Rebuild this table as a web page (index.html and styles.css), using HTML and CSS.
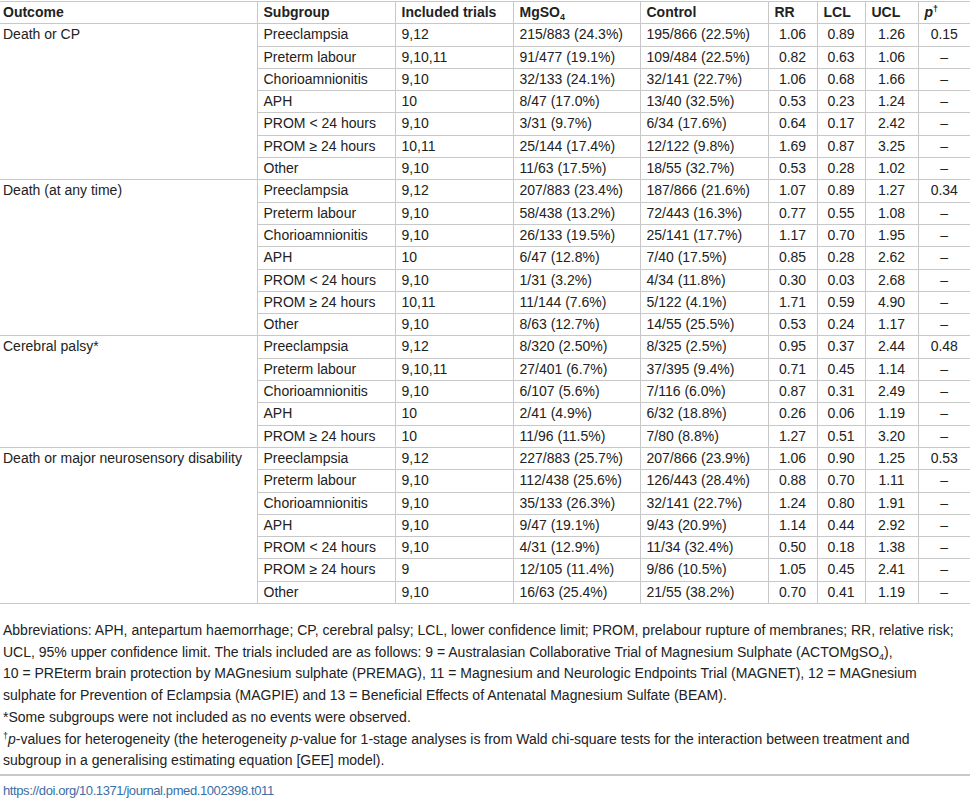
FILE: index.html
```html
<!DOCTYPE html>
<html lang="en">
<head>
  <meta charset="UTF-8">
  <meta name="viewport" content="width=device-width, initial-scale=1.0">
  <title>Subgroup analyses by reason for preterm birth</title>
  <link rel="stylesheet" href="styles.css">
</head>
<body>
  <table class="data-table">
    <colgroup>
      <col class="c-outcome">
      <col class="c-subgroup">
      <col class="c-trials">
      <col class="c-mg">
      <col class="c-control">
      <col class="c-rr">
      <col class="c-lcl">
      <col class="c-ucl">
      <col class="c-p">
    </colgroup>
    <thead>
      <tr>
        <th class="first">Outcome</th>
        <th>Subgroup</th>
        <th>Included trials</th>
        <th>MgSO<sub>4</sub></th>
        <th>Control</th>
        <th>RR</th>
        <th>LCL</th>
        <th>UCL</th>
        <th><i>p</i><sup>†</sup></th>
      </tr>
    </thead>
    <tbody>
      <!-- Death or CP -->
      <tr>
        <td class="first" rowspan="7">Death or CP</td>
        <td>Preeclampsia</td><td>9,12</td><td>215/883 (24.3%)</td><td>195/866 (22.5%)</td>
        <td class="num">1.06</td><td class="num">0.89</td><td class="num">1.26</td><td class="num">0.15</td>
      </tr>
      <tr>
        <td>Preterm labour</td><td>9,10,11</td><td>91/477 (19.1%)</td><td>109/484 (22.5%)</td>
        <td class="num">0.82</td><td class="num">0.63</td><td class="num">1.06</td><td class="num">–</td>
      </tr>
      <tr>
        <td>Chorioamnionitis</td><td>9,10</td><td>32/133 (24.1%)</td><td>32/141 (22.7%)</td>
        <td class="num">1.06</td><td class="num">0.68</td><td class="num">1.66</td><td class="num">–</td>
      </tr>
      <tr>
        <td>APH</td><td>10</td><td>8/47 (17.0%)</td><td>13/40 (32.5%)</td>
        <td class="num">0.53</td><td class="num">0.23</td><td class="num">1.24</td><td class="num">–</td>
      </tr>
      <tr>
        <td>PROM &lt; 24 hours</td><td>9,10</td><td>3/31 (9.7%)</td><td>6/34 (17.6%)</td>
        <td class="num">0.64</td><td class="num">0.17</td><td class="num">2.42</td><td class="num">–</td>
      </tr>
      <tr>
        <td>PROM ≥ 24 hours</td><td>10,11</td><td>25/144 (17.4%)</td><td>12/122 (9.8%)</td>
        <td class="num">1.69</td><td class="num">0.87</td><td class="num">3.25</td><td class="num">–</td>
      </tr>
      <tr>
        <td>Other</td><td>9,10</td><td>11/63 (17.5%)</td><td>18/55 (32.7%)</td>
        <td class="num">0.53</td><td class="num">0.28</td><td class="num">1.02</td><td class="num">–</td>
      </tr>

      <!-- Death (at any time) -->
      <tr>
        <td class="first" rowspan="7">Death (at any time)</td>
        <td>Preeclampsia</td><td>9,12</td><td>207/883 (23.4%)</td><td>187/866 (21.6%)</td>
        <td class="num">1.07</td><td class="num">0.89</td><td class="num">1.27</td><td class="num">0.34</td>
      </tr>
      <tr>
        <td>Preterm labour</td><td>9,10</td><td>58/438 (13.2%)</td><td>72/443 (16.3%)</td>
        <td class="num">0.77</td><td class="num">0.55</td><td class="num">1.08</td><td class="num">–</td>
      </tr>
      <tr>
        <td>Chorioamnionitis</td><td>9,10</td><td>26/133 (19.5%)</td><td>25/141 (17.7%)</td>
        <td class="num">1.17</td><td class="num">0.70</td><td class="num">1.95</td><td class="num">–</td>
      </tr>
      <tr>
        <td>APH</td><td>10</td><td>6/47 (12.8%)</td><td>7/40 (17.5%)</td>
        <td class="num">0.85</td><td class="num">0.28</td><td class="num">2.62</td><td class="num">–</td>
      </tr>
      <tr>
        <td>PROM &lt; 24 hours</td><td>9,10</td><td>1/31 (3.2%)</td><td>4/34 (11.8%)</td>
        <td class="num">0.30</td><td class="num">0.03</td><td class="num">2.68</td><td class="num">–</td>
      </tr>
      <tr>
        <td>PROM ≥ 24 hours</td><td>10,11</td><td>11/144 (7.6%)</td><td>5/122 (4.1%)</td>
        <td class="num">1.71</td><td class="num">0.59</td><td class="num">4.90</td><td class="num">–</td>
      </tr>
      <tr>
        <td>Other</td><td>9,10</td><td>8/63 (12.7%)</td><td>14/55 (25.5%)</td>
        <td class="num">0.53</td><td class="num">0.24</td><td class="num">1.17</td><td class="num">–</td>
      </tr>

      <!-- Cerebral palsy -->
      <tr>
        <td class="first" rowspan="5">Cerebral palsy*</td>
        <td>Preeclampsia</td><td>9,12</td><td>8/320 (2.50%)</td><td>8/325 (2.5%)</td>
        <td class="num">0.95</td><td class="num">0.37</td><td class="num">2.44</td><td class="num">0.48</td>
      </tr>
      <tr>
        <td>Preterm labour</td><td>9,10,11</td><td>27/401 (6.7%)</td><td>37/395 (9.4%)</td>
        <td class="num">0.71</td><td class="num">0.45</td><td class="num">1.14</td><td class="num">–</td>
      </tr>
      <tr>
        <td>Chorioamnionitis</td><td>9,10</td><td>6/107 (5.6%)</td><td>7/116 (6.0%)</td>
        <td class="num">0.87</td><td class="num">0.31</td><td class="num">2.49</td><td class="num">–</td>
      </tr>
      <tr>
        <td>APH</td><td>10</td><td>2/41 (4.9%)</td><td>6/32 (18.8%)</td>
        <td class="num">0.26</td><td class="num">0.06</td><td class="num">1.19</td><td class="num">–</td>
      </tr>
      <tr>
        <td>PROM ≥ 24 hours</td><td>10</td><td>11/96 (11.5%)</td><td>7/80 (8.8%)</td>
        <td class="num">1.27</td><td class="num">0.51</td><td class="num">3.20</td><td class="num">–</td>
      </tr>

      <!-- Death or major neurosensory disability -->
      <tr>
        <td class="first" rowspan="7">Death or major neurosensory disability</td>
        <td>Preeclampsia</td><td>9,12</td><td>227/883 (25.7%)</td><td>207/866 (23.9%)</td>
        <td class="num">1.06</td><td class="num">0.90</td><td class="num">1.25</td><td class="num">0.53</td>
      </tr>
      <tr>
        <td>Preterm labour</td><td>9,10</td><td>112/438 (25.6%)</td><td>126/443 (28.4%)</td>
        <td class="num">0.88</td><td class="num">0.70</td><td class="num">1.11</td><td class="num">–</td>
      </tr>
      <tr>
        <td>Chorioamnionitis</td><td>9,10</td><td>35/133 (26.3%)</td><td>32/141 (22.7%)</td>
        <td class="num">1.24</td><td class="num">0.80</td><td class="num">1.91</td><td class="num">–</td>
      </tr>
      <tr>
        <td>APH</td><td>9,10</td><td>9/47 (19.1%)</td><td>9/43 (20.9%)</td>
        <td class="num">1.14</td><td class="num">0.44</td><td class="num">2.92</td><td class="num">–</td>
      </tr>
      <tr>
        <td>PROM &lt; 24 hours</td><td>9,10</td><td>4/31 (12.9%)</td><td>11/34 (32.4%)</td>
        <td class="num">0.50</td><td class="num">0.18</td><td class="num">1.38</td><td class="num">–</td>
      </tr>
      <tr>
        <td>PROM ≥ 24 hours</td><td>9</td><td>12/105 (11.4%)</td><td>9/86 (10.5%)</td>
        <td class="num">1.05</td><td class="num">0.45</td><td class="num">2.41</td><td class="num">–</td>
      </tr>
      <tr>
        <td>Other</td><td>9,10</td><td>16/63 (25.4%)</td><td>21/55 (38.2%)</td>
        <td class="num">0.70</td><td class="num">0.41</td><td class="num">1.19</td><td class="num">–</td>
      </tr>
    </tbody>
  </table>

  <div class="notes">
    <p>Abbreviations: APH, antepartum haemorrhage; CP, cerebral palsy; LCL, lower confidence limit; PROM, prelabour rupture of membranes; RR, relative risk; UCL, 95% upper confidence limit. The trials included are as follows: 9 = Australasian Collaborative Trial of Magnesium Sulphate (ACTOMgSO<sub>4</sub>),<br>10 = PREterm brain protection by MAGnesium sulphate (PREMAG), 11 = Magnesium and Neurologic Endpoints Trial (MAGNET), 12 = MAGnesium sulphate for Prevention of Eclampsia (MAGPIE) and 13 = Beneficial Effects of Antenatal Magnesium Sulfate (BEAM).</p>
    <p>*Some subgroups were not included as no events were observed.</p>
    <p><sup>†</sup><i>p</i>-values for heterogeneity (the heterogeneity <i>p</i>-value for 1-stage analyses is from Wald chi-square tests for the interaction between treatment and subgroup in a generalising estimating equation [GEE] model).</p>
  </div>

  <div class="doi">
    <a href="#">https://doi.org/10.1371/journal.pmed.1002398.t011</a>
  </div>
</body>
</html>
```

FILE: styles.css
```css
body {
  margin: 0;
  font-family: "Liberation Sans", Arial, sans-serif;
  font-size: 14px;
  color: #222;
  background-color: #fff;
}

.data-table {
  width: 970px;
  margin-top: 1px;
  border-collapse: collapse;
  table-layout: fixed;
}

.c-outcome { width: 257px; }
.c-subgroup { width: 138px; }
.c-trials { width: 118px; }
.c-mg { width: 127px; }
.c-control { width: 128px; }
.c-rr { width: 49px; }
.c-lcl { width: 48px; }
.c-ucl { width: 53px; }
.c-p { width: 52px; }

th,
td {
  padding: 3px 6px;
  line-height: 15.3px;
  border: 1px solid #c8c8c8;
  text-align: left;
  vertical-align: top;
  white-space: nowrap;
}

th:first-child,
td.first {
  border-left: none;
  padding-left: 3px;
}

th:last-child,
td:last-child {
  border-right: none;
}

th {
  font-weight: bold;
}

td.num {
  text-align: center;
}

sub,
sup {
  font-size: 9px;
  line-height: 0;
}

sub {
  vertical-align: -3px;
}

sup {
  vertical-align: 5px;
}

.notes {
  margin-top: 16px;
  padding-left: 3px;
  width: 965px;
}

.notes p {
  margin: 0;
  line-height: 21.7px;
}

.doi {
  margin-top: 2px;
  border-top: 2px solid #c8c8c8;
  width: 968px;
  padding: 6px 3px 0;
}

.doi a {
  color: #3a6ea5;
  text-decoration: none;
  font-size: 13px;
  letter-spacing: -0.4px;
}
```
